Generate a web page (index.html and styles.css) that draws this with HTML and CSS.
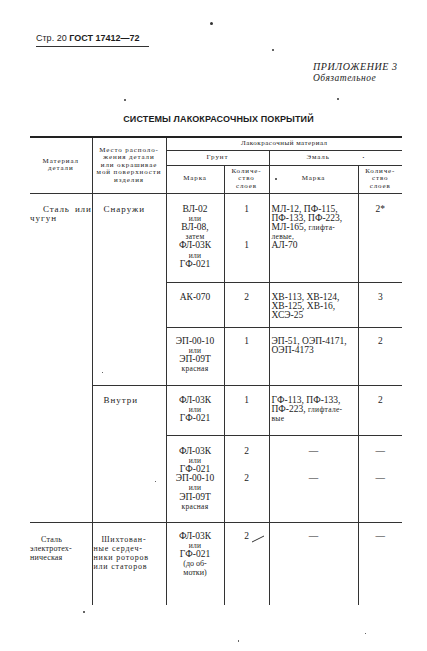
FILE: index.html
```html
<!DOCTYPE html>
<html lang="ru">
<head>
<meta charset="utf-8">
<title>ГОСТ 17412—72, стр. 20</title>
<link rel="stylesheet" href="styles.css">
</head>
<body>
<div class="page">
  <div class="runhead"><span>Стр. 20</span> <span class="b">ГОСТ 17412—72</span></div>
  <div class="appendix">
    <div class="app-title">ПРИЛОЖЕНИЕ 3</div>
    <div class="app-sub">Обязательное</div>
  </div>
  <h1 class="title">СИСТЕМЫ ЛАКОКРАСОЧНЫХ ПОКРЫТИЙ</h1>
  <table class="grid">
    <colgroup>
      <col class="w1"><col class="w2"><col class="w3"><col class="w4"><col class="w5"><col class="w6">
    </colgroup>
    <thead>
      <tr class="h1">
        <th rowspan="3" class="top">Материал<br>детали</th>
        <th rowspan="3" class="top vl">Место располо-<br>жения детали<br>или окрашивае<br>мой поверхности<br>изделия</th>
        <th colspan="4" class="top vl narrow">Лакокрасочный материал</th>
      </tr>
      <tr class="h2">
        <th colspan="2" class="vl ht">Грунт</th>
        <th colspan="2" class="vl ht">Эмаль <span class="dot-in">•</span></th>
      </tr>
      <tr class="h3">
        <th class="vl ht">Марка</th>
        <th class="vl ht">Количе-<br>ство<br>слоев</th>
        <th class="vl ht">Марка</th>
        <th class="vl ht">Количе-<br>ство<br>слоев</th>
      </tr>
    </thead>
    <tbody>
      <tr class="rA">
        <td rowspan="5" class="c1 hb"><div class="jl">Сталь или</div><div>чугун</div></td>
        <td rowspan="3" class="c2 vl hb"><div class="ind2">Снаружи</div></td>
        <td class="cc vl hb">ВЛ-02<br><span class="sm">или</span><br>ВЛ-08,<br><span class="sm">затем</span><br>ФЛ-03К<br><span class="sm">или</span><br>ГФ-021</td>
        <td class="cc vl hb">1<br><br><br><br>1</td>
        <td class="cl vl hb">МЛ-12, ПФ-115,<br>ПФ-133, ПФ-223,<br>МЛ-165, <span class="sm">глифта-</span><br><span class="sm">левые,</span><br>АЛ-70</td>
        <td class="cc vl hb">2*</td>
      </tr>
      <tr class="rB">
        <td class="cc vl ht">АК-070</td>
        <td class="cc vl ht">2</td>
        <td class="cl vl ht">ХВ-113, ХВ-124,<br>ХВ-125, ХВ-16,<br>ХСЭ-25</td>
        <td class="cc vl ht">3</td>
      </tr>
      <tr class="rC">
        <td class="cc vl ht">ЭП-00-10<br><span class="sm">или</span><br>ЭП-09Т<br><span class="sm">красная</span></td>
        <td class="cc vl ht">1</td>
        <td class="cl vl ht">ЭП-51, ОЭП-4171,<br>ОЭП-4173</td>
        <td class="cc vl ht">2</td>
      </tr>
      <tr class="rD">
        <td rowspan="2" class="c2 vl ht"><div class="ind2">Внутри</div></td>
        <td class="cc vl ht">ФЛ-03К<br><span class="sm">или</span><br>ГФ-021</td>
        <td class="cc vl ht">1</td>
        <td class="cl vl ht">ГФ-113, ПФ-133,<br>ПФ-223, <span class="sm">глифтале-</span><br><span class="sm">вые</span></td>
        <td class="cc vl ht">2</td>
      </tr>
      <tr class="rE">
        <td class="cc vl ht">ФЛ-03К<br><span class="sm">или</span><br>ГФ-021<br>ЭП-00-10<br><span class="sm">или</span><br>ЭП-09Т<br><span class="sm">красная</span></td>
        <td class="cc vl ht">2<br><br><br>2</td>
        <td class="cc vl ht">—<br><br><br>—</td>
        <td class="cc vl ht">—<br><br><br>—</td>
      </tr>
      <tr class="rF">
        <td class="c1 f1 ht"><div class="ind3">Сталь<br>электротех-<br>ническая</div></td>
        <td class="c2 f2 vl ht"><div class="ind4">Шихтован-<br>ные сердеч-<br>ники роторов<br>или статоров</div></td>
        <td class="cc vl ht">ФЛ-03К<br><span class="sm">или</span><br>ГФ-021<br><span class="sm2">(до об-<br>мотки)</span></td>
        <td class="cc vl ht">2<svg class="tick" width="14" height="8" viewBox="0 0 14 8"><path d="M1 7 L13 1" stroke="#333" stroke-width="1" fill="none"/></svg></td>
        <td class="cc vl ht">—</td>
        <td class="cc vl ht">—</td>
      </tr>
    </tbody>
  </table>
  <span class="speck s1"></span>
  <span class="speck s2"></span>
  <span class="speck s3"></span>
  <span class="speck s4"></span>
  <span class="speck s5"></span>
  <span class="speck s6"></span>
  <span class="speck s7"></span>
  <span class="speck s8"></span>
  <span class="speck s9"></span>
  <span class="speck s10"></span>
</div>
</body>
</html>
```

FILE: styles.css
```css
html, body {
  margin: 0;
  background: #ffffff;
  color: #1c1c1c;
}

.page {
  position: relative;
  width: 397px;
  padding: 33px 0 0 30px;
  height: 618px;
}

.runhead {
  display: block;
  margin-left: 6px;
  width: 113px;
  padding-bottom: 3px;
  border-bottom: 1px solid #333;
  font-family: "Liberation Sans", Arial, sans-serif;
  font-size: 9px;
  line-height: 10px;
  white-space: nowrap;
}

.runhead .b {
  font-weight: bold;
}

.appendix {
  margin-top: 14px;
  padding-left: 283px;
  font-family: "Liberation Serif", "Times New Roman", serif;
  font-style: italic;
  white-space: nowrap;
}

.app-title {
  font-size: 10px;
  line-height: 12px;
  letter-spacing: 0.6px;
}

.app-sub {
  font-size: 9.5px;
  line-height: 11px;
  letter-spacing: 0.5px;
}

.title {
  margin: 29px 0 0 0;
  width: 372px;
  padding-left: 5px;
  box-sizing: border-box;
  text-align: center;
  font-family: "Liberation Sans", Arial, sans-serif;
  font-weight: bold;
  font-size: 9px;
  line-height: 12px;
  letter-spacing: 0.1px;
}

.grid {
  margin-top: 11px;
  width: 372px;
  border-collapse: collapse;
  table-layout: fixed;
  font-family: "Liberation Serif", "Times New Roman", serif;
}

.w1 { width: 62px; }
.w2 { width: 74px; }
.w3 { width: 58px; }
.w4 { width: 45px; }
.w5 { width: 89px; }
.w6 { width: 44px; }

.grid th,
.grid td {
  padding: 0;
  border: 0;
}

.grid th {
  font-weight: normal;
  font-size: 7px;
  line-height: 7.5px;
  letter-spacing: 0.9px;
  text-align: center;
  vertical-align: middle;
  white-space: nowrap;
}

.grid th.narrow {
  font-size: 7px;
  letter-spacing: 0.5px;
}

.h1 { height: 13px; }
.h2 { height: 15px; }
.h3 { height: 28px; }

.top { border-top: 2px solid #222 !important; }
.vl { border-left: 1px solid #333 !important; }
.ht { border-top: 1px solid #333 !important; }
.hb { border-top: 1px solid #333 !important; }

.dot-in {
  font-size: 5px;
  margin-left: 30px;
}

.grid td {
  vertical-align: top;
  font-size: 9.5px;
  line-height: 9.2px;
  white-space: nowrap;
}

.cc { text-align: center; }
.cl { text-align: left; padding-left: 2px !important; }

.sm {
  font-size: 7.5px;
  letter-spacing: 0.3px;
}

.sm2 {
  font-size: 8px;
}

.grid td.c1,
.grid td.c2 {
  font-size: 9px;
  letter-spacing: 1px;
}

.jl {
  margin-left: 13px;
  text-align: justify;
  text-align-last: justify;
  letter-spacing: 0.8px;
}

.ind2 {
  padding-left: 11px;
}

.grid td.f1 {
  font-size: 8px;
  letter-spacing: 0.2px;
}

.grid td.f2 {
  font-size: 8px;
  letter-spacing: 0.8px;
}

.ind3 {
  text-indent: 11px;
  text-align: left;
}

.ind4 {
  padding-left: 1px;
  text-indent: 8px;
  text-align: left;
}

.rA { height: 89px; }
.rB { height: 45px; }
.rC { height: 58px; }
.rD { height: 50px; }
.rE { height: 87px; }
.rF { height: 83px; }

.rA td { padding-top: 11px; }
.rB td { padding-top: 10px; }
.rC td { padding-top: 9px; }
.rD td { padding-top: 10px; }
.rE td { padding-top: 11px; }
.rF td { padding-top: 9px; }
.rF .c1, .rF .c2 { padding-top: 12px; }

.tick {
  vertical-align: -4px;
  margin-left: 2px;
  margin-right: -16px;
}

.speck {
  position: absolute;
  width: 2px;
  height: 2px;
  border-radius: 50%;
  background: #333;
}

.s1 { left: 210px; top: 22px; width: 3px; height: 3px; }
.s2 { left: 272px; top: 49px; }
.s3 { left: 124px; top: 99px; }
.s4 { left: 337px; top: 98px; }
.s5 { left: 275px; top: 178px; }
.s6 { left: 83px; top: 611px; }
.s7 { left: 238px; top: 640px; width: 1px; }
.s8 { left: 365px; top: 633px; width: 1px; height: 1px; }
.s9 { left: 102px; top: 372px; width: 1px; height: 1px; }
.s10 { left: 155px; top: 481px; width: 1px; height: 1px; }
```
